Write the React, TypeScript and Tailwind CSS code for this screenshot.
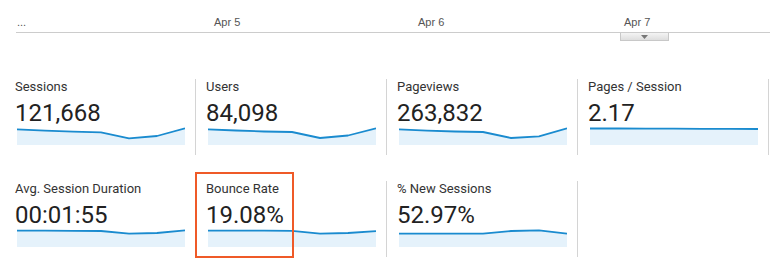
import React from "react";

type Metric = { label: string; value: string; data: number[] };

const row1: Metric[] = [
  { label: "Sessions", value: "121,668", data: [2.3, 3.7, 4.7, 5.3, 11.3, 9, 1.3] },
  { label: "Users", value: "84,098", data: [2.3, 3.5, 4.5, 5, 11, 8.5, 1.3] },
  { label: "Pageviews", value: "263,832", data: [2.3, 3.7, 4.5, 5, 11, 9.3, 1.3] },
  { label: "Pages / Session", value: "2.17", data: [1.5, 1.5, 1.6, 1.7, 1.9, 1.8, 2] },
];

const row2: Metric[] = [
  { label: "Avg. Session Duration", value: "00:01:55", data: [1.7, 1.7, 1.9, 2.0, 4.7, 4, 1.3] },
  { label: "Bounce Rate", value: "19.08%", data: [1.7, 1.7, 1.7, 1.9, 4.7, 4, 2.2] },
  { label: "% New Sessions", value: "52.97%", data: [4.7, 4.7, 4.7, 4.7, 2, 1.3, 4.7] },
];

function Sparkline({ data }: { data: number[] }) {
  const w = 168;
  const h = 18;
  const step = w / (data.length - 1);
  const pts = data.map((y, i) => `${(i * step).toFixed(1)},${y}`).join(" ");
  const area = `0,${h} ${pts} ${w},${h}`;
  return (
    <svg width={w} height={h} viewBox={`0 0 ${w} ${h}`} className="block ml-[2px]">
      <polygon points={area} fill="#e5f2fb" />
      <polyline points={pts} fill="none" stroke="#1a8bcf" strokeWidth={1.8} strokeLinejoin="round" />
    </svg>
  );
}

function Card({ m, highlight }: { m: Metric; highlight?: boolean }) {
  return (
    <div className="relative h-[76px] border-r border-[#d4d4d4] pl-[10px]">
      <div className="text-[13px] leading-[16px] text-[#333]">{m.label}</div>
      <div className="mt-[4px] text-[24px] leading-[28px] text-[#222]">{m.value}</div>
      <Sparkline data={m.data} />
      {highlight && (
        <div className="absolute left-[-1px] top-[-9px] w-[99px] h-[86px] border-2 border-[#ef5a28] pointer-events-none" />
      )}
    </div>
  );
}

export default function App() {
  return (
    <div className="w-[770px] h-[279px] bg-white overflow-hidden" style={{ fontFamily: "Roboto, 'Liberation Sans', sans-serif" }}>
      {/* axis */}
      <div className="pt-[16px] pl-[16px]">
        <div
          className="flex h-[17px] items-end border-b border-[#cccccc] text-[11px] leading-[14px] text-[#555] pb-[3px]"
          style={{ fontFamily: "'Liberation Sans', Arial, sans-serif" }}
        >
          <div className="w-[198px] pl-[1px]">...</div>
          <div className="w-[204px]">Apr 5</div>
          <div className="w-[206px]">Apr 6</div>
          <div>Apr 7</div>
        </div>
        <div className="flex">
          <div className="ml-[604px] w-[49px] h-[8px] border border-t-0 border-[#c8c8c8] bg-gradient-to-b from-[#f4f4f4] to-[#dedede] flex items-center justify-center">
            <svg width="7" height="4" viewBox="0 0 7 4" className="block">
              <polygon points="0,0 7,0 3.5,4" fill="#777" />
            </svg>
          </div>
        </div>
      </div>

      {/* metrics */}
      <div className="mt-[38px] ml-[5px] w-[764px] grid grid-cols-4 gap-y-[26px]">
        {row1.map((m) => (
          <Card key={m.label} m={m} />
        ))}
        {row2.map((m) => (
          <Card key={m.label} m={m} highlight={m.label === "Bounce Rate"} />
        ))}
      </div>
    </div>
  );
}
